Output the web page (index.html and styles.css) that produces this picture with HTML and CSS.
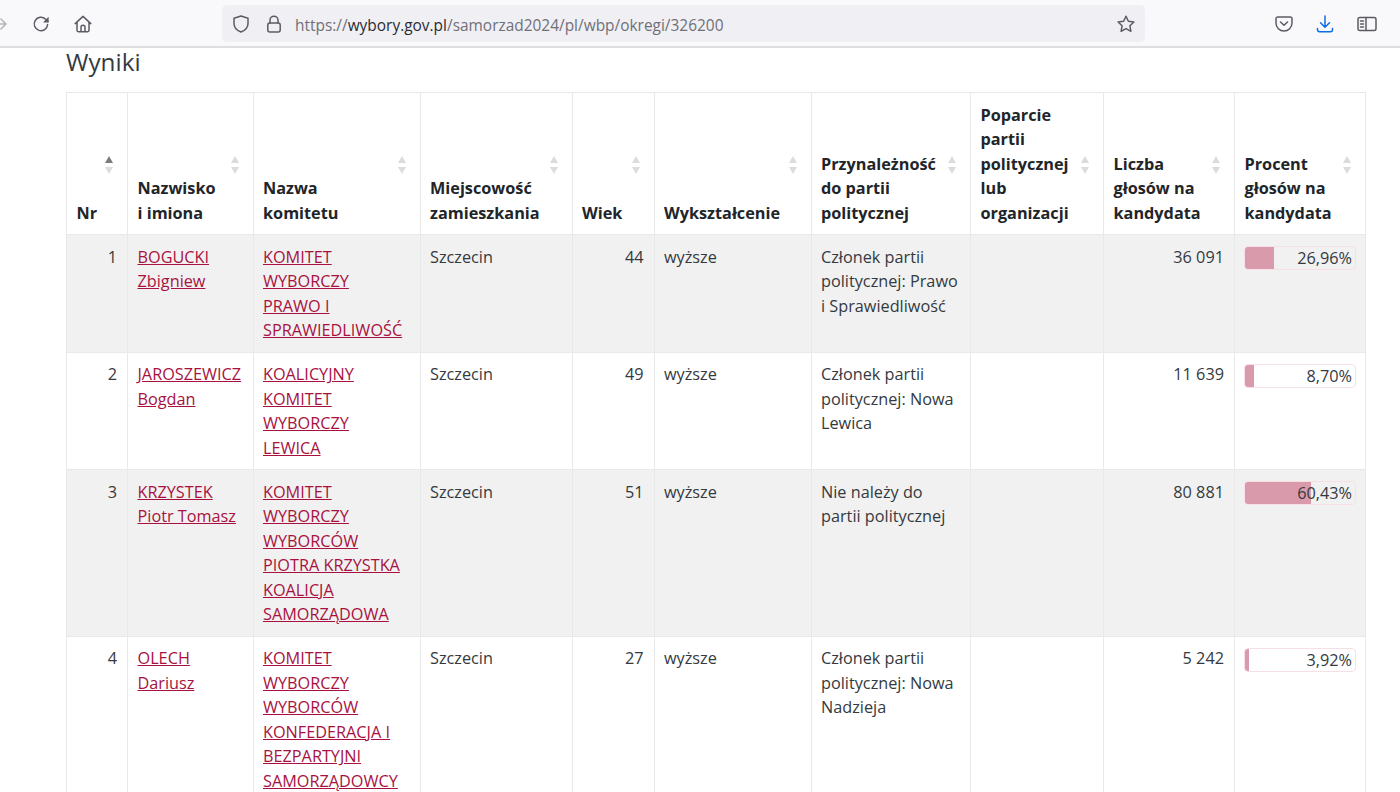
FILE: index.html
```html
<!DOCTYPE html>
<html lang="pl">
<head>
<meta charset="utf-8">
<title>Wyniki</title>
<link rel="stylesheet" href="styles.css">
</head>
<body>
<header class="toolbar">
  <div class="nav-icons">
    <svg class="ico ico-back" viewBox="10 0 8 18"><path d="M2 9h14M11 4l5 5-5 5"/></svg>
    <svg class="ico" viewBox="0 0 18 18"><path d="M15.6 9.500A6.700 6.700 0 1 1 13.600 4.200L16 6.400"/><path class="solid" d="M16.600 1.800v5.600H11z"/></svg>
    <svg class="ico" viewBox="0 0 18 18"><path d="M1.200 8.600 9 1.400l7.800 7.200M3 7.200v8a1.600 1.600 0 0 0 1.600 1.600h8.800a1.600 1.600 0 0 0 1.600-1.600v-8M7 16.800v-4.600a2 2 0 0 1 4 0v4.600z"/></svg>
  </div>
  <div class="urlbar">
    <svg class="ico" viewBox="0 0 18 18"><path d="M9 1 2 3.200v5.300c0 4.300 3 7 7 8.500 4-1.500 7-4.200 7-8.500V3.200z"/></svg>
    <svg class="ico ico-lock" viewBox="2 0 14 18"><rect x="2.800" y="8" width="12.400" height="9" rx="2"/><path d="M5 8V5.200a4 4 0 0 1 8 0V8"/></svg>
    <span class="url">https://<b>wybory.gov.pl</b>/samorzad2024/pl/wbp/okregi/326200</span>
    <svg class="ico ico-star" viewBox="0 0 18 18"><path d="m9 1.300 2.400 5 5.500.7-4 3.800 1 5.500L9 13.600l-4.900 2.700 1-5.500-4-3.800 5.500-.7z"/></svg>
  </div>
  <div class="tool-icons">
    <svg class="ico" viewBox="0 0 18 18"><path d="M2.800 2h12.400A1.800 1.800 0 0 1 17 3.800V8A8 8 0 0 1 1 8V3.800A1.800 1.800 0 0 1 2.800 2z"/><path d="m5.500 7 3.500 3.300L12.500 7"/></svg>
    <svg class="ico ico-dl" viewBox="0 0 18 18"><path d="M9 1v11M4.500 7.800 9 12.300l4.500-4.500M1.500 13.500v1.200a2 2 0 0 0 2 2h11a2 2 0 0 0 2-2v-1.200"/></svg>
    <svg class="ico ico-side" viewBox="0 0 20 18"><rect x="1" y="2.500" width="18" height="13" rx="2"/><path d="M9 2.500v13M3.500 6h3M3.500 9h3M3.500 12h3"/></svg>
  </div>
</header>
<main class="content">
  <h2 class="title">Wyniki</h2>
  <table class="results">
    <colgroup>
      <col class="c-nr"><col class="c-name"><col class="c-comm"><col class="c-city"><col class="c-age"><col class="c-edu"><col class="c-party"><col class="c-sup"><col class="c-votes"><col class="c-pct">
    </colgroup>
    <thead>
      <tr>
        <th>Nr<span class="sort active"></span></th>
        <th>Nazwisko<br>i imiona<span class="sort"></span></th>
        <th>Nazwa<br>komitetu<span class="sort"></span></th>
        <th>Miejscowość<br>zamieszkania<span class="sort"></span></th>
        <th>Wiek<span class="sort"></span></th>
        <th>Wykształcenie<span class="sort"></span></th>
        <th>Przynależność<br>do partii<br>politycznej<span class="sort"></span></th>
        <th>Poparcie<br>partii<br>politycznej<br>lub<br>organizacji<span class="sort"></span></th>
        <th>Liczba<br>głosów na<br>kandydata<span class="sort"></span></th>
        <th>Procent<br>głosów na<br>kandydata<span class="sort"></span></th>
      </tr>
    </thead>
    <tbody>
      <tr>
        <td class="num">1</td>
        <td><a href="#">BOGUCKI<br>Zbigniew</a></td>
        <td><a href="#">KOMITET<br>WYBORCZY<br>PRAWO I<br>SPRAWIEDLIWOŚĆ</a></td>
        <td>Szczecin</td>
        <td class="num">44</td>
        <td>wyższe</td>
        <td>Członek partii<br>politycznej: Prawo<br>i Sprawiedliwość</td>
        <td></td>
        <td class="num">36 091</td>
        <td><div class="bar"><div class="fill" style="width:26.96%"></div><span class="pct">26,96%</span></div></td>
      </tr>
      <tr>
        <td class="num">2</td>
        <td><a href="#">JAROSZEWICZ<br>Bogdan</a></td>
        <td><a href="#">KOALICYJNY<br>KOMITET<br>WYBORCZY<br>LEWICA</a></td>
        <td>Szczecin</td>
        <td class="num">49</td>
        <td>wyższe</td>
        <td>Członek partii<br>politycznej: Nowa<br>Lewica</td>
        <td></td>
        <td class="num">11 639</td>
        <td><div class="bar"><div class="fill" style="width:8.7%"></div><span class="pct">8,70%</span></div></td>
      </tr>
      <tr>
        <td class="num">3</td>
        <td><a href="#">KRZYSTEK<br>Piotr Tomasz</a></td>
        <td><a href="#">KOMITET<br>WYBORCZY<br>WYBORCÓW<br>PIOTRA KRZYSTKA<br>KOALICJA<br>SAMORZĄDOWA</a></td>
        <td>Szczecin</td>
        <td class="num">51</td>
        <td>wyższe</td>
        <td>Nie należy do<br>partii politycznej</td>
        <td></td>
        <td class="num">80 881</td>
        <td><div class="bar"><div class="fill" style="width:60.43%"></div><span class="pct">60,43%</span></div></td>
      </tr>
      <tr>
        <td class="num">4</td>
        <td><a href="#">OLECH<br>Dariusz</a></td>
        <td><a href="#">KOMITET<br>WYBORCZY<br>WYBORCÓW<br>KONFEDERACJA I<br>BEZPARTYJNI<br>SAMORZĄDOWCY</a></td>
        <td>Szczecin</td>
        <td class="num">27</td>
        <td>wyższe</td>
        <td>Członek partii<br>politycznej: Nowa<br>Nadzieja</td>
        <td></td>
        <td class="num">5 242</td>
        <td><div class="bar"><div class="fill" style="width:3.92%"></div><span class="pct">3,92%</span></div></td>
      </tr>
    </tbody>
  </table>
</main>
</body>
</html>
```
FILE: styles.css
```css
* { box-sizing: border-box; }
html, body { margin: 0; height: 792px; overflow: hidden; background: #fff; }
body { font-family: "Open Sans", "Noto Sans", sans-serif; color: #343a40; font-size: 16.25px; }

.toolbar {
  height: 48px;
  background: #f9f9fb;
  border-bottom: 2px solid #dedee0;
  display: flex;
  align-items: center;
  padding-top: 1px;
}
.ico {
  width: 18px;
  height: 18px;
  fill: none;
  stroke: #5b5b66;
  stroke-width: 1.5;
  stroke-linecap: round;
  stroke-linejoin: round;
  flex: none;
  display: block;
}
.ico .solid { fill: #5b5b66; stroke: none; }
.nav-icons { display: flex; align-items: center; width: 222px; gap: 24px; }
.ico-back { width: 8px; stroke: #b4b4ba; }
.urlbar {
  width: 923px;
  height: 37px;
  background: #f0f0f4;
  border-radius: 5px;
  display: flex;
  align-items: center;
  padding: 0 10px 0 10px;
}
.ico-lock { margin-left: 17px; width: 14px; }
.url { margin-left: 14px; padding-top: 2px; flex: 1; font-size: 15.45px; color: #6f6f78; white-space: nowrap; }
.url b { font-weight: 500; color: #2b2b33; }
.tool-icons { display: flex; align-items: center; margin-left: 130px; gap: 23px; }
.ico-dl { stroke: #0a6fe8; }
.ico-side { width: 20px; }

.content { padding: 0 34px 0 66px; }
.title { margin: 0; height: 44px; font-size: 24.3px; font-weight: 400; line-height: 28px; color: #343a40; }

.results { border-collapse: collapse; table-layout: fixed; width: 1299px; line-height: 24.5px; }
.results th, .results td { border: 1px solid #e9e9e9; padding: 9.5px 10px 9px 9.5px; vertical-align: top; text-align: left; }
.results th { position: relative; vertical-align: bottom; font-weight: 700; color: #212529; }
.results tbody tr:nth-child(odd) { background: #f1f1f1; }
.results td.num { text-align: right; }
.results a { color: #a8113f; }
.c-nr { width: 61px; } .c-name { width: 125.5px; } .c-comm { width: 167px; } .c-city { width: 152px; }
.c-age { width: 82px; } .c-edu { width: 157px; } .c-party { width: 159.5px; } .c-sup { width: 133px; }
.c-votes { width: 131px; } .c-pct { width: 131px; }

.sort { position: absolute; right: 14px; top: 50%; width: 8px; height: 18px; margin-top: -8px; }
.sort::before, .sort::after { content: ""; position: absolute; left: 0; border-left: 4px solid transparent; border-right: 4px solid transparent; }
.sort::before { top: 0; border-bottom: 7px solid #dcdcdc; }
.sort::after { bottom: 0; border-top: 7px solid #dcdcdc; }
.sort.active::before { border-bottom-color: #7c7c7c; }

.bar { position: relative; height: 24px; margin: 1.5px -1px 0 -1px; border: 1px solid #f6e0e5; border-radius: 4px; overflow: hidden; text-align: right; line-height: 22px; padding-right: 3px; }
.fill { position: absolute; left: 0; top: 0; bottom: 0; background: #d99bab; }
.pct { position: relative; }
```
